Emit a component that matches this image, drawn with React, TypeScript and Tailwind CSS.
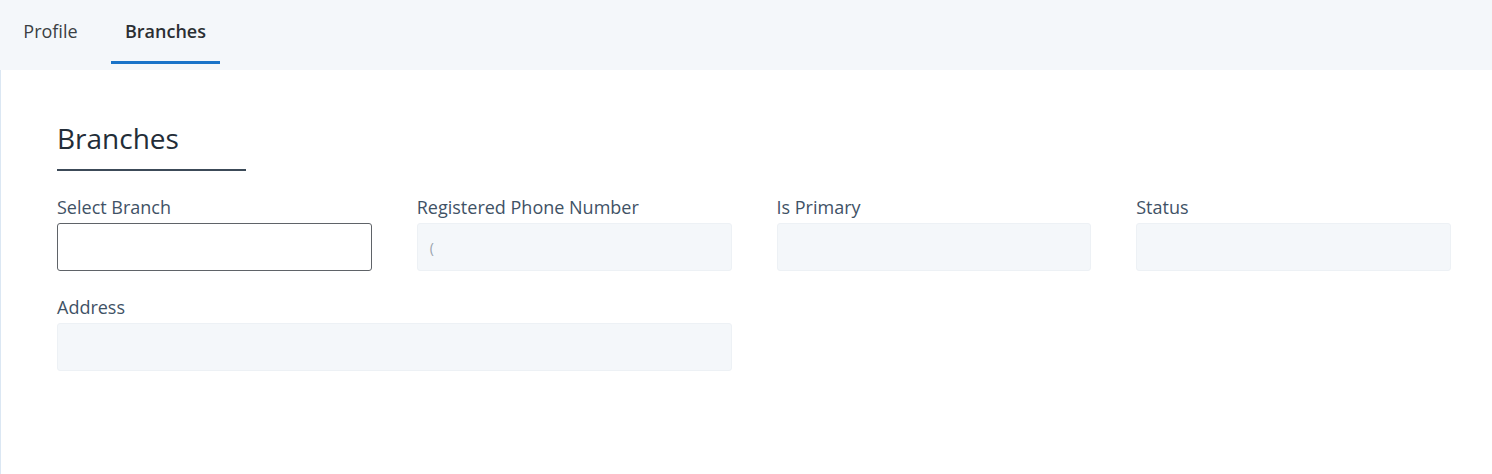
import React from 'react';

const tabs = ['Profile', 'Branches'];

const Field = ({ label, children, span, input }: { label: string; children?: React.ReactNode; span?: boolean; input?: boolean }) => (
  <div className={span ? 'col-span-2' : ''}>
    <div className="text-[18px] leading-[24px] text-[#3f5266] mb-1">{label}</div>
    {input ? (
      <div className="h-[48px] rounded-[3px] border border-[#5f6368] bg-white" />
    ) : (
      <div className="h-[48px] rounded-[3px] border border-[#edf1f5] bg-[#f4f7fa] flex items-center px-[12px] text-[#b8c0c8] text-[14px]">
        {children}
      </div>
    )}
  </div>
);

export default function App() {
  return (
    <div className="w-[1492px] h-[474px] bg-white" style={{ fontFamily: '"Open Sans", "Noto Sans", sans-serif' }}>
      {/* Tabs */}
      <div className="h-[70px] bg-[#f4f7fa] flex gap-[19px] pl-[9px]">
        {tabs.map((t) => (
          <div
            key={t}
            className={`h-[64px] flex items-center justify-center pt-[2px] text-[18px] border-b-[3px] ${
              t === 'Branches'
                ? 'w-[109px] border-[#1a73c8] font-semibold text-[#2b2f33]'
                : 'w-[83px] border-transparent text-[#3a3f44]'
            }`}
          >
            {t}
          </div>
        ))}
      </div>

      {/* Content */}
      <div className="h-[404px] border-l border-[#dbe7f3] pl-[56px] pr-[41px] pt-[50px]">
        <div className="w-[189px] border-b-2 border-[#3c4a58] pb-[13px]">
          <h2 className="text-[28px] leading-[36px] text-[#232d38]">Branches</h2>
        </div>

        <div className="grid grid-cols-4 gap-x-[45px] gap-y-[24px] mt-[24px]">
          <Field label="Select Branch" input />
          <Field label="Registered Phone Number">
            <span className="text-[#9aa3ad]">(</span>
          </Field>
          <Field label="Is Primary" />
          <Field label="Status" />
          <Field label="Address" span />
        </div>
      </div>
    </div>
  );
}
